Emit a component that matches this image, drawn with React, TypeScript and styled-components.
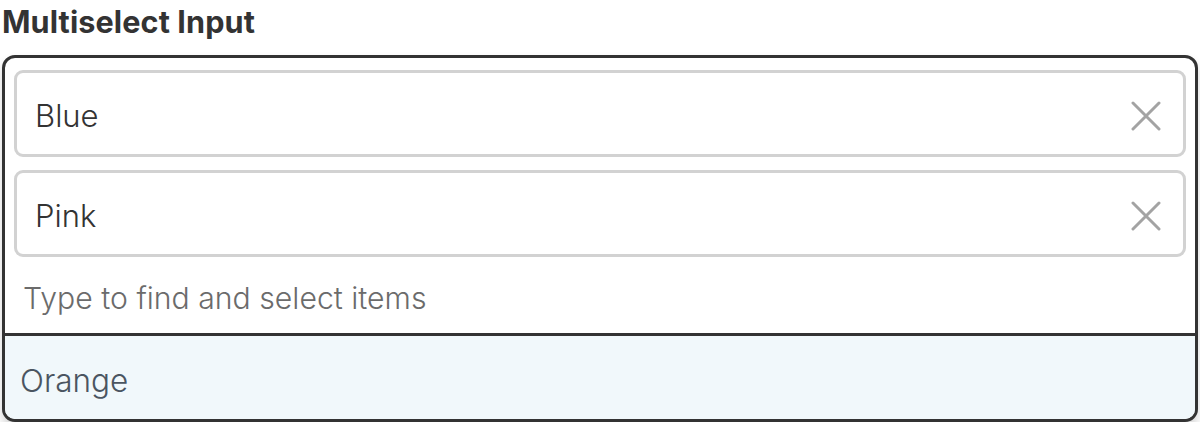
import React from "react";
import styled, { createGlobalStyle } from "styled-components";

const Global = createGlobalStyle`
  html, body { margin: 0; padding: 0; background: #ffffff; }
  body { font-family: "Inter", "Open Sans", sans-serif; }
  * { box-sizing: border-box; }
`;

const Page = styled.div`
  padding: 4px 2px 0 2px;
  width: 1200px;
`;

const Title = styled.div`
  font-family: "Inter", sans-serif;
  font-weight: 700;
  font-size: 30.6px;
  line-height: 36px;
  letter-spacing: 0.1px;
  color: #333333;
  margin: 0 0 15px 0;
`;

const Box = styled.div`
  width: 1196px;
  border: 3px solid #333333;
  border-radius: 13px;
  overflow: hidden;
  box-shadow: 0 6px 10px rgba(0, 0, 0, 0.17);
  background: #ffffff;
`;

const Chips = styled.div`
  display: flex;
  flex-direction: column;
  gap: 13px;
  padding: 12px 9px 0 9px;
`;

const Chip = styled.div`
  height: 87px;
  border: 3px solid #d2d2d2;
  border-radius: 9px;
  display: flex;
  align-items: center;
  justify-content: space-between;
  padding: 4px 22px 0 18px;
  font-size: 31px;
  font-weight: 300;
  color: #333333;
`;

const Clear = styled.button`
  border: none;
  background: none;
  padding: 0;
  width: 30px;
  height: 30px;
  display: flex;
  align-items: center;
  justify-content: center;
  cursor: pointer;
`;

const Search = styled.div`
  height: 79px;
  display: flex;
  align-items: center;
  padding: 5px 18px 0 18px;
  font-size: 30.2px;
  font-weight: 300;
  color: #6b6b6b;
  border-bottom: 3px solid #333333;
`;

const Option = styled.div<{ $active?: boolean }>`
  height: 83px;
  display: flex;
  align-items: center;
  padding: 6px 15px 0 15px;
  font-size: 31.5px;
  font-weight: 300;
  color: #4a5561;
  background: ${(p) => (p.$active ? "#f1f8fb" : "#ffffff")};
`;

const XIcon = () => (
  <svg width="30" height="30" viewBox="0 0 30 30" fill="none">
    <path d="M2 2L28 28M28 2L2 28" stroke="#a3a3a3" strokeWidth="3" strokeLinecap="round" />
  </svg>
);

export default function App() {
  const selected = ["Blue", "Pink"];
  return (
    <>
      <Global />
      <Page>
        <Title>Multiselect Input</Title>
        <Box>
          <Chips>
            {selected.map((s) => (
              <Chip key={s}>
                <span>{s}</span>
                <Clear aria-label={`Remove ${s}`}>
                  <XIcon />
                </Clear>
              </Chip>
            ))}
          </Chips>
          <Search>Type to find and select items</Search>
          <Option $active>Orange</Option>
        </Box>
      </Page>
    </>
  );
}
